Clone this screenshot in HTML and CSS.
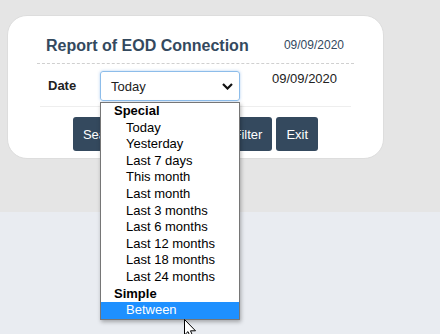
FILE: index.html
```html
<!DOCTYPE html>
<html lang="en">
  <head>
    <meta charset="UTF-8" />
    <title>Report of EOD Connection</title>
    <link rel="stylesheet" href="styles.css">
  </head>
  <body>
    <div class="top">
      <div class="card">
        <div class="head">
          <h1>Report of EOD Connection</h1>
          <span class="head-date">09/09/2020</span>
        </div>

        <div class="row">
          <label class="label">Date</label>
          <div class="select">
            <span>Today</span>
            <svg class="chev" width="11" height="7" viewBox="0 0 11 7">
              <path d="M1 1 L5.5 5.5 L10 1" fill="none" stroke="#111" stroke-width="2.2" />
            </svg>
          </div>
          <span class="row-date">09/09/2020</span>
        </div>

        <div class="buttons">
          <button class="btn">Search</button>
          <button class="btn">Print</button>
          <button class="btn">Clear Filter</button>
          <button class="btn">Exit</button>
        </div>
      </div>
    </div>
    <div class="bottom"></div>

    <!-- open list of the date select -->
    <ul class="options">
      <li class="group">Special</li>
      <li>Today</li>
      <li>Yesterday</li>
      <li>Last 7 days</li>
      <li>This month</li>
      <li>Last month</li>
      <li>Last 3 months</li>
      <li>Last 6 months</li>
      <li>Last 12 months</li>
      <li>Last 18 months</li>
      <li>Last 24 months</li>
      <li class="group">Simple</li>
      <li class="active">Between</li>
    </ul>

    <svg class="cursor" width="13" height="20" viewBox="0 0 13 20">
      <path d="M0.5 0.5 L0.5 16 L4 12.6 L6.6 18.6 L9 17.6 L6.5 11.8 L11.5 11.8 Z" fill="#fff" stroke="#000" stroke-width="1" stroke-linejoin="round" />
    </svg>
  </body>
</html>
```

FILE: styles.css
```css
:root {
  --navy: #34495e;
  --top-bg: #e5e5e5;
  --bottom-bg: #e9ecf1;
  --pick: #1e90ff;
}

body {
  margin: 0;
  font-family: "Liberation Sans", Arial, sans-serif;
  height: 334px;
  overflow: hidden;
  background: var(--bottom-bg);
}

.top {
  height: 212px;
  padding: 15px 0 0 7px;
  box-sizing: border-box;
  background: var(--top-bg);
}

.card {
  width: 377px;
  height: 144px;
  box-sizing: border-box;
  padding: 0 29px 0 29px;
  background: #fff;
  border: 1px solid #dddddd;
  border-radius: 20px;
}

.head {
  display: flex;
  justify-content: space-between;
  align-items: baseline;
  padding: 20px 10px 7px 9px;
  border-bottom: 1px dashed #d0d0d0;
}

h1 {
  margin: 0;
  font-size: 16px;
  line-height: 20px;
  font-weight: 700;
  color: var(--navy);
}

.head-date {
  font-size: 12px;
  color: var(--navy);
  position: relative;
  top: -2px;
}

.row {
  display: flex;
  align-items: flex-start;
  margin: 0 3px;
  padding: 7px 8px 5px;
  border-bottom: 1px solid #eeeeee;
}

.label {
  width: 52px;
  font-size: 13px;
  font-weight: 700;
  line-height: 30px;
  color: #222;
}

.select {
  width: 140px;
  height: 30px;
  box-sizing: border-box;
  display: flex;
  align-items: center;
  justify-content: space-between;
  padding: 0 6px 0 10px;
  font-size: 13px;
  color: #222;
  border: 1px solid #8dbdea;
  border-radius: 3px;
  box-shadow: 0 0 3px rgba(100, 160, 230, 0.5);
}

.row-date {
  margin-left: 32px;
  font-size: 13px;
  line-height: 15px;
  color: #222;
}

.buttons {
  display: flex;
  justify-content: center;
  gap: 4px;
  margin-top: 10px;
}

.btn {
  height: 34px;
  padding: 0 10px;
  font-family: inherit;
  font-size: 13px;
  color: #fff;
  background: var(--navy);
  border: none;
  border-radius: 3px;
}

/* open select list, drawn over the page */
.options {
  position: absolute;
  left: 100px;
  top: 102px;
  width: 138px;
  margin: 0;
  padding: 0;
  list-style: none;
  background: #fff;
  border: 1px solid #767676;
  box-shadow: 1px 2px 4px rgba(0, 0, 0, 0.3);
  font-size: 13px;
  color: #000;
}

.options li {
  height: 16.6px;
  line-height: 16.6px;
  padding-left: 25px;
}

.options .group {
  padding-left: 13px;
  font-weight: 700;
}

.options .active {
  background: var(--pick);
  color: #fff;
}

.cursor {
  position: absolute;
  left: 184px;
  top: 319px;
}
```
